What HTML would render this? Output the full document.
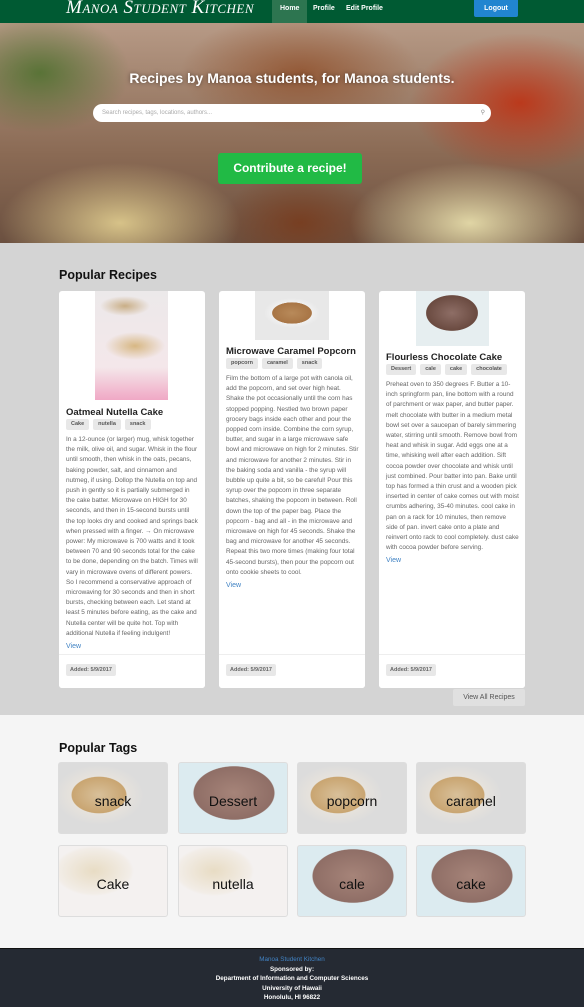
<!DOCTYPE html>
<html><head><meta charset="utf-8"><style>
*{box-sizing:border-box;margin:0;padding:0}
body{width:584px;height:1007px;overflow:hidden;font-family:"Liberation Sans",sans-serif;background:#f5f5f5;position:relative}
.nav{position:absolute;top:0;left:0;width:584px;height:23px;background:#005a33}
.logo{position:absolute;left:66px;top:-3px;color:#fff;font-family:"Liberation Serif",serif;font-style:italic;font-size:19px;letter-spacing:0.5px;font-variant:small-caps}
.ni{position:absolute;top:0;height:23px;line-height:17px;color:#fff;font-size:7px;font-weight:bold;padding:0 8px}
.logout{position:absolute;left:474px;top:0;width:44px;height:17px;background:#2185d0;color:#fff;font-size:7px;font-weight:bold;text-align:center;line-height:17px;border-radius:0 0 2px 2px}
.hero{position:absolute;top:23px;left:0;width:584px;height:220px;overflow:hidden;
background:
radial-gradient(ellipse 90px 60px at 40px 50px,rgba(70,110,40,.8),transparent),
radial-gradient(ellipse 110px 70px at 520px 80px,rgba(190,50,20,.9),transparent),
radial-gradient(ellipse 120px 60px at 300px 50px,rgba(140,70,30,.7),transparent),
radial-gradient(ellipse 120px 60px at 470px 200px,rgba(230,220,170,.95),transparent),
radial-gradient(ellipse 120px 60px at 120px 200px,rgba(220,200,140,.95),transparent),
radial-gradient(ellipse 80px 50px at 300px 200px,rgba(120,60,30,.9),transparent),
linear-gradient(#b79a86,#8a6a54 60%,#6b5040)}
.hero h1{position:absolute;top:47px;width:100%;text-align:center;color:#fff;font-size:14px;font-weight:bold;text-shadow:0 0 4px rgba(0,0,0,.5)}
.search{position:absolute;left:93px;top:81px;width:398px;height:18px;background:#fff;border-radius:9px;font-size:6px;color:#aaa;line-height:18px;padding-left:9px}
.contrib{position:absolute;left:218px;top:130px;width:144px;height:31px;background:#21ba45;color:#fff;font-size:12px;font-weight:bold;text-align:center;line-height:31px;border-radius:3px}
.gray{position:absolute;top:243px;left:0;width:584px;height:472px;background:#d4d4d4}
h2{position:absolute;font-size:12.5px;font-weight:bold;color:#111}
.card{position:absolute;top:291px;width:146px;height:397px;background:#fff;border-radius:3px}
.card .img{position:absolute;top:0}
.card .body{position:absolute;left:7px;right:6px}
.card h3{font-size:9.5px;font-weight:bold;color:#222;height:13px;line-height:13px;white-space:nowrap}
.tags{display:flex;gap:4px;height:11px}
.tag{background:#e8e8e8;color:#555;font-size:5.5px;line-height:11px;padding:0 5px;border-radius:2px;font-weight:bold}
.card p{font-size:6.4px;line-height:10.2px;color:#666;margin-top:5px}
.view{font-size:7px;color:#4183c4;margin-top:4px}
.foot{position:absolute;left:0;right:0;bottom:0;height:34px;border-top:1px solid #eee;background:#fff;border-radius:0 0 3px 3px}
.added{position:absolute;left:7px;top:9px;background:#e8e8e8;color:#666;font-size:5.5px;padding:3px 4px;border-radius:2px;font-weight:bold}
.va{position:absolute;left:453px;top:689px;width:72px;height:17px;background:#e0e0e0;color:#555;font-size:7px;text-align:center;line-height:17px;border-radius:2px}
.tile{position:absolute;width:110px;height:72px;border-radius:3px;text-align:center;line-height:76px;font-size:14px;color:#111;overflow:hidden;border:1px solid #ddd}
.pop{background:radial-gradient(ellipse 45px 30px at 40px 32px,#d8c09a 0,#c9a571 60%,#e6e2dc 62%,#dcdcdc 100%)}
.cake{background:radial-gradient(ellipse 50px 33px at 55px 30px,#a68479 0,#8f6e66 80%,#dcebf0 82%)}
.mug{background:radial-gradient(ellipse 40px 25px at 35px 25px,#e8dcc4,#f2ede7 90%,#f4f1f0)}
.ft{position:absolute;top:948px;left:0;width:584px;height:59px;background:#252a33;border-top:1px solid #111;text-align:center;font-size:6.3px;font-weight:bold;color:#fff;line-height:9.5px;padding-top:6px}
</style></head><body>
<div class="nav">
<div class="logo">Manoa Student Kitchen</div>
<div class="ni" style="left:272px;background:#2d7550;padding:0 8px">Home</div>
<div class="ni" style="left:305px">Profile</div>
<div class="ni" style="left:338px">Edit Profile</div>
<div class="logout">Logout</div>
</div>
<div class="hero">
<h1>Recipes by Manoa students, for Manoa students.</h1>
<div class="search">Search recipes, tags, locations, authors...<span style="position:absolute;right:6px;color:#888">&#9906;</span></div>
<div class="contrib">Contribute a recipe!</div>
</div>
<div class="gray"></div>
<h2 style="left:59px;top:268px">Popular Recipes</h2>

<div class="card" style="left:59px">
<div class="img" style="left:36px;width:73px;height:109px;background:radial-gradient(ellipse 30px 14px at 40px 55px,#d7b783,transparent),radial-gradient(ellipse 25px 10px at 30px 15px,#c9ae86,transparent),linear-gradient(#ece9ea,#f4e7ea 70%,#f0a8c5)"></div>
<div class="body" style="top:115px"><h3>Oatmeal Nutella Cake</h3>
<div class="tags"><span class="tag">Cake</span><span class="tag">nutella</span><span class="tag">snack</span></div>
<p>In a 12-ounce (or larger) mug, whisk together the milk, olive oil, and sugar. Whisk in the flour until smooth, then whisk in the oats, pecans, baking powder, salt, and cinnamon and nutmeg, if using. Dollop the Nutella on top and push in gently so it is partially submerged in the cake batter. Microwave on HIGH for 30 seconds, and then in 15-second bursts until the top looks dry and cooked and springs back when pressed with a finger. → On microwave power: My microwave is 700 watts and it took between 70 and 90 seconds total for the cake to be done, depending on the batch. Times will vary in microwave ovens of different powers. So I recommend a conservative approach of microwaving for 30 seconds and then in short bursts, checking between each. Let stand at least 5 minutes before eating, as the cake and Nutella center will be quite hot. Top with additional Nutella if feeling indulgent!</p>
<div class="view">View</div></div>
<div class="foot"><span class="added">Added: 5/9/2017</span></div>
</div>

<div class="card" style="left:219px">
<div class="img" style="left:36px;width:74px;height:49px;background:radial-gradient(ellipse 28px 15px at 37px 22px,#b88a5a,#a87545 70%,#f0f0f0 72%,#e8e8e8)"></div>
<div class="body" style="top:54px"><h3>Microwave Caramel Popcorn</h3>
<div class="tags"><span class="tag">popcorn</span><span class="tag">caramel</span><span class="tag">snack</span></div>
<p>Film the bottom of a large pot with canola oil, add the popcorn, and set over high heat. Shake the pot occasionally until the corn has stopped popping. Nestled two brown paper grocery bags inside each other and pour the popped corn inside. Combine the corn syrup, butter, and sugar in a large microwave safe bowl and microwave on high for 2 minutes. Stir and microwave for another 2 minutes. Stir in the baking soda and vanilla - the syrup will bubble up quite a bit, so be careful! Pour this syrup over the popcorn in three separate batches, shaking the popcorn in between. Roll down the top of the paper bag. Place the popcorn - bag and all - in the microwave and microwave on high for 45 seconds. Shake the bag and microwave for another 45 seconds. Repeat this two more times (making four total 45-second bursts), then pour the popcorn out onto cookie sheets to cool.</p>
<div class="view">View</div></div>
<div class="foot"><span class="added">Added: 5/9/2017</span></div>
</div>

<div class="card" style="left:379px">
<div class="img" style="left:37px;width:73px;height:55px;background:radial-gradient(ellipse 32px 22px at 36px 22px,#8e6e66,#6a4a40 80%,#e6eef0 82%)"></div>
<div class="body" style="top:60px"><h3>Flourless Chocolate Cake</h3>
<div class="tags"><span class="tag">Dessert</span><span class="tag">cale</span><span class="tag">cake</span><span class="tag">chocolate</span></div>
<p>Preheat oven to 350 degrees F. Butter a 10-inch springform pan, line bottom with a round of parchment or wax paper, and butter paper. melt chocolate with butter in a medium metal bowl set over a saucepan of barely simmering water, stirring until smooth. Remove bowl from heat and whisk in sugar. Add eggs one at a time, whisking well after each addition. Sift cocoa powder over chocolate and whisk until just combined. Pour batter into pan. Bake until top has formed a thin crust and a wooden pick inserted in center of cake comes out with moist crumbs adhering, 35-40 minutes. cool cake in pan on a rack for 10 minutes, then remove side of pan. invert cake onto a plate and reinvert onto rack to cool completely. dust cake with cocoa powder before serving.</p>
<div class="view">View</div></div>
<div class="foot"><span class="added">Added: 5/9/2017</span></div>
</div>
<div class="va">View All Recipes</div>

<h2 style="left:59px;top:741px">Popular Tags</h2>
<div class="tile pop" style="left:58px;top:762px">snack</div>
<div class="tile cake" style="left:178px;top:762px">Dessert</div>
<div class="tile pop" style="left:297px;top:762px">popcorn</div>
<div class="tile pop" style="left:416px;top:762px">caramel</div>
<div class="tile mug" style="left:58px;top:845px">Cake</div>
<div class="tile mug" style="left:178px;top:845px">nutella</div>
<div class="tile cake" style="left:297px;top:845px">cale</div>
<div class="tile cake" style="left:416px;top:845px">cake</div>

<div class="ft"><span style="color:#4183c4;font-weight:normal">Manoa Student Kitchen</span><br>Sponsored by:<br>Department of Information and Computer Sciences<br>University of Hawaii<br>Honolulu, HI 96822</div>
</body></html>
